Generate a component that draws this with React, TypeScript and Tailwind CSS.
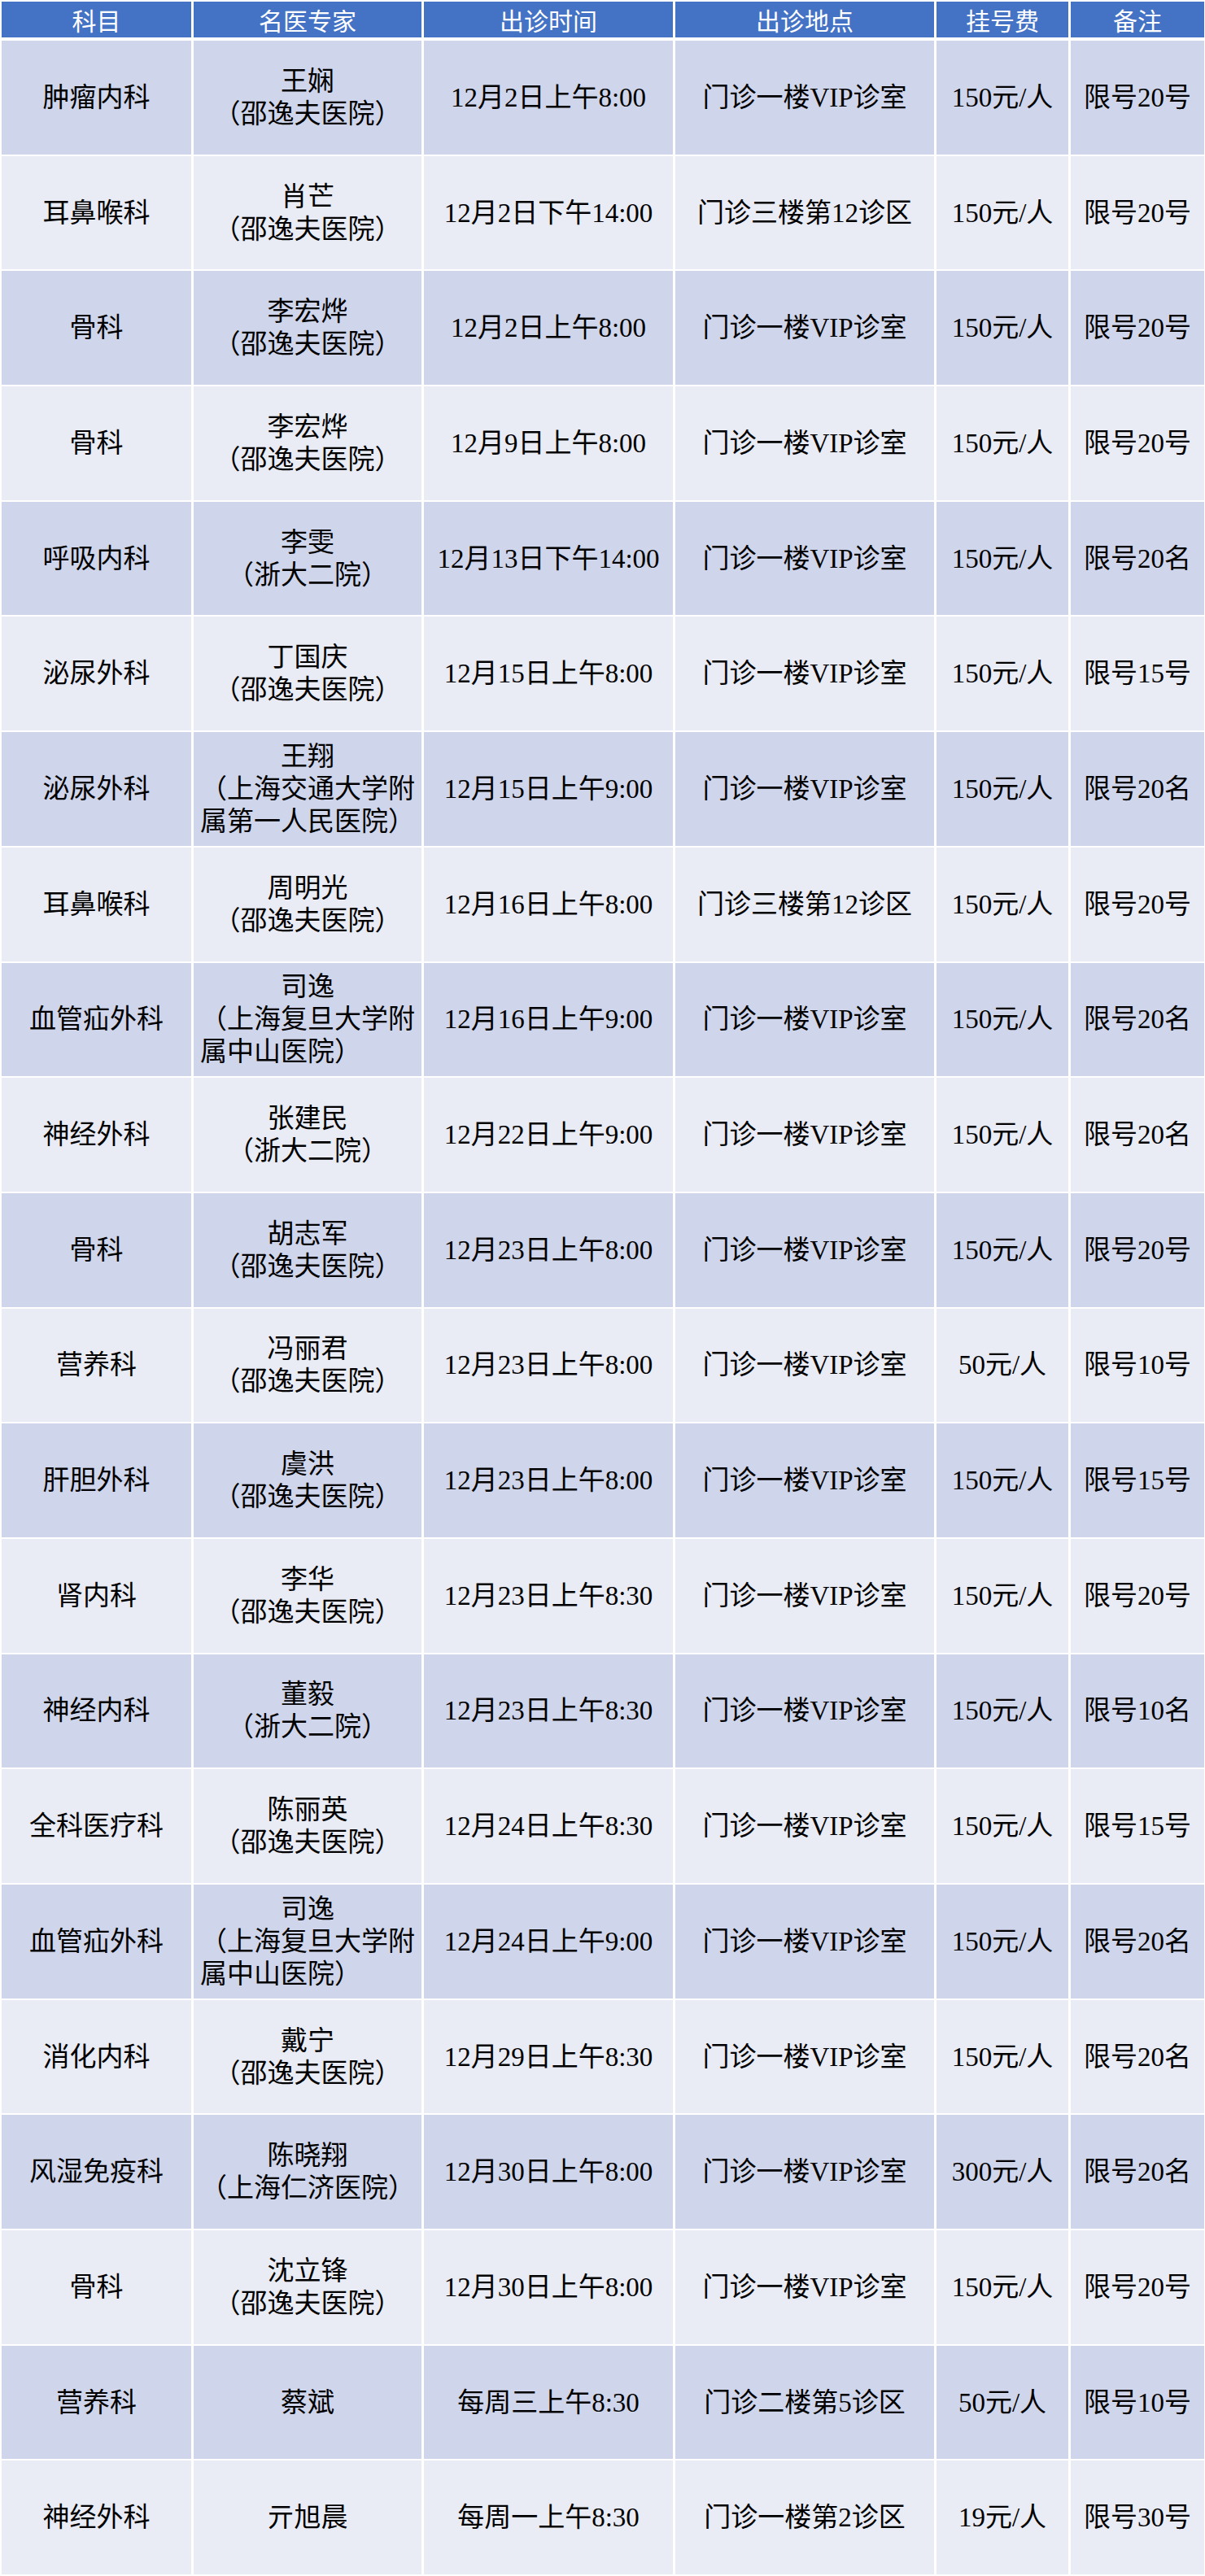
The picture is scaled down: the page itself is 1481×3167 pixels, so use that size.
type Row = {
  dept: string;
  name: string;
  hosp: string[];
  time: string;
  place: string;
  fee: string;
  limit: string;
};

const SYF = ['（邵逸夫医院）'];
const ZD = ['（浙大二院）'];
const VIP = '门诊一楼VIP诊室';

const rows: Row[] = [
  { dept: '肿瘤内科', name: '王娴', hosp: SYF, time: '12月2日上午8:00', place: VIP, fee: '150元/人', limit: '限号20号' },
  { dept: '耳鼻喉科', name: '肖芒', hosp: SYF, time: '12月2日下午14:00', place: '门诊三楼第12诊区', fee: '150元/人', limit: '限号20号' },
  { dept: '骨科', name: '李宏烨', hosp: SYF, time: '12月2日上午8:00', place: VIP, fee: '150元/人', limit: '限号20号' },
  { dept: '骨科', name: '李宏烨', hosp: SYF, time: '12月9日上午8:00', place: VIP, fee: '150元/人', limit: '限号20号' },
  { dept: '呼吸内科', name: '李雯', hosp: ZD, time: '12月13日下午14:00', place: VIP, fee: '150元/人', limit: '限号20名' },
  { dept: '泌尿外科', name: '丁国庆', hosp: SYF, time: '12月15日上午8:00', place: VIP, fee: '150元/人', limit: '限号15号' },
  { dept: '泌尿外科', name: '王翔', hosp: ['（上海交通大学附', '属第一人民医院）'], time: '12月15日上午9:00', place: VIP, fee: '150元/人', limit: '限号20名' },
  { dept: '耳鼻喉科', name: '周明光', hosp: SYF, time: '12月16日上午8:00', place: '门诊三楼第12诊区', fee: '150元/人', limit: '限号20号' },
  { dept: '血管疝外科', name: '司逸', hosp: ['（上海复旦大学附', '属中山医院）'], time: '12月16日上午9:00', place: VIP, fee: '150元/人', limit: '限号20名' },
  { dept: '神经外科', name: '张建民', hosp: ZD, time: '12月22日上午9:00', place: VIP, fee: '150元/人', limit: '限号20名' },
  { dept: '骨科', name: '胡志军', hosp: SYF, time: '12月23日上午8:00', place: VIP, fee: '150元/人', limit: '限号20号' },
  { dept: '营养科', name: '冯丽君', hosp: SYF, time: '12月23日上午8:00', place: VIP, fee: '50元/人', limit: '限号10号' },
  { dept: '肝胆外科', name: '虞洪', hosp: SYF, time: '12月23日上午8:00', place: VIP, fee: '150元/人', limit: '限号15号' },
  { dept: '肾内科', name: '李华', hosp: SYF, time: '12月23日上午8:30', place: VIP, fee: '150元/人', limit: '限号20号' },
  { dept: '神经内科', name: '董毅', hosp: ZD, time: '12月23日上午8:30', place: VIP, fee: '150元/人', limit: '限号10名' },
  { dept: '全科医疗科', name: '陈丽英', hosp: SYF, time: '12月24日上午8:30', place: VIP, fee: '150元/人', limit: '限号15号' },
  { dept: '血管疝外科', name: '司逸', hosp: ['（上海复旦大学附', '属中山医院）'], time: '12月24日上午9:00', place: VIP, fee: '150元/人', limit: '限号20名' },
  { dept: '消化内科', name: '戴宁', hosp: SYF, time: '12月29日上午8:30', place: VIP, fee: '150元/人', limit: '限号20名' },
  { dept: '风湿免疫科', name: '陈晓翔', hosp: ['（上海仁济医院）'], time: '12月30日上午8:00', place: VIP, fee: '300元/人', limit: '限号20名' },
  { dept: '骨科', name: '沈立锋', hosp: SYF, time: '12月30日上午8:00', place: VIP, fee: '150元/人', limit: '限号20号' },
  { dept: '营养科', name: '蔡斌', hosp: [], time: '每周三上午8:30', place: '门诊二楼第5诊区', fee: '50元/人', limit: '限号10号' },
  { dept: '神经外科', name: '亓旭晨', hosp: [], time: '每周一上午8:30', place: '门诊一楼第2诊区', fee: '19元/人', limit: '限号30号' },
];

const headers = ['科目', '名医专家', '出诊时间', '出诊地点', '挂号费', '备注'];

function Cell({ band, children }: { band: boolean; children: React.ReactNode }) {
  return (
    <div
      className={`flex flex-col items-center justify-center whitespace-nowrap text-center text-[33px] leading-[40px] text-black ${
        band ? 'bg-[#cfd5ea]' : 'bg-[#e9ebf5]'
      }`}
    >
      {children}
    </div>
  );
}

export default function App() {
  return (
    <div className="min-h-screen bg-white pt-[2px] pl-[2px] font-['Liberation_Serif','Noto_Sans_CJK_SC',serif]">
      <div className="grid grid-cols-[233px_280px_306px_318px_162px_164px] grid-rows-[46px_repeat(22,139.7px)] gap-x-[3px] gap-y-[2px]">
        {headers.map((h) => (
          <div
            key={h}
            className="flex h-[44px] items-center justify-center bg-[#4472c4] font-['Noto_Sans_CJK_SC',sans-serif] text-[30px] leading-none text-white"
          >
            {h}
          </div>
        ))}
        {rows.map((r, i) => {
          const band = i % 2 === 0;
          return [
            <Cell key={`${i}-d`} band={band}>{r.dept}</Cell>,
            <Cell key={`${i}-n`} band={band}>
              <div>{r.name}</div>
              {r.hosp.length > 0 && (
                <div className="text-left">
                  {r.hosp.map((l) => (
                    <div key={l}>{l}</div>
                  ))}
                </div>
              )}
            </Cell>,
            <Cell key={`${i}-t`} band={band}>{r.time}</Cell>,
            <Cell key={`${i}-p`} band={band}>{r.place}</Cell>,
            <Cell key={`${i}-f`} band={band}>{r.fee}</Cell>,
            <Cell key={`${i}-l`} band={band}>{r.limit}</Cell>,
          ];
        })}
      </div>
    </div>
  );
}
